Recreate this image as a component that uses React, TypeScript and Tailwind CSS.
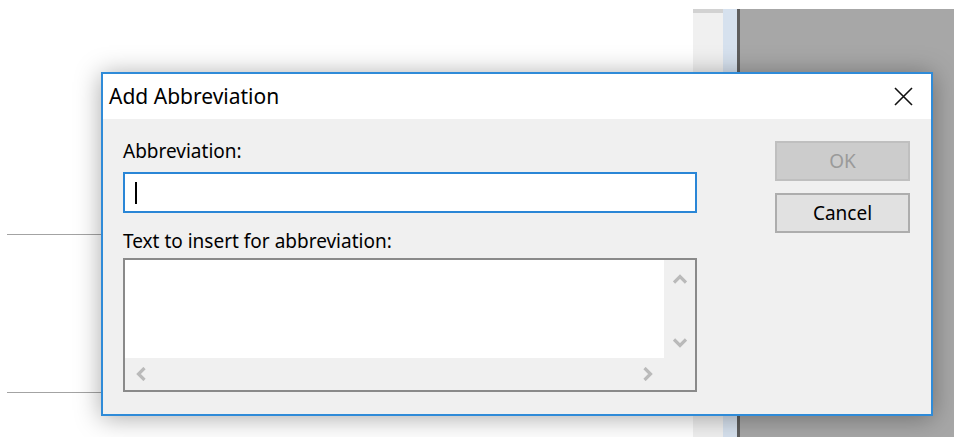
import { ReactNode } from 'react'

const uiFont = { fontFamily: '"Noto Sans", "Open Sans", sans-serif' }

function Chevron({ dir }: { dir: 'up' | 'down' | 'left' | 'right' }) {
  const paths: Record<string, string> = {
    up: 'M1 9.5 L7 3.5 L13 9.5',
    down: 'M1 4.5 L7 10.5 L13 4.5',
    left: 'M9.5 1 L3.5 7 L9.5 13',
    right: 'M4.5 1 L10.5 7 L4.5 13',
  }
  return (
    <svg width="14" height="14" viewBox="0 0 14 14" className="shrink-0">
      <path d={paths[dir]} fill="none" stroke="#bababa" strokeWidth="3.2" />
    </svg>
  )
}

function DialogButton({ children, disabled }: { children: ReactNode; disabled?: boolean }) {
  return (
    <button
      type="button"
      disabled={disabled}
      className={
        disabled
          ? 'flex h-[40px] w-[135px] items-center justify-center border-2 border-[#bfbfbf] bg-[#cccccc] text-[19px] text-[#9a9a9a]'
          : 'flex h-[40px] w-[135px] items-center justify-center border-2 border-[#adadad] bg-[#e1e1e1] text-[19px] text-black'
      }
    >
      {children}
    </button>
  )
}

function AddAbbreviationDialog() {
  return (
    <div
      className="absolute left-[101px] top-[72px] flex h-[344px] w-[832px] flex-col border-2 border-[#2f8bd8] bg-[#f0f0f0] shadow-[0_2px_24px_rgba(0,0,0,0.34)]"
      style={uiFont}
    >
      <div className="flex h-[45px] shrink-0 items-center justify-between bg-white pl-[6px] pr-[18px]">
        <span className="text-[21px] text-black">Add Abbreviation</span>
        <svg width="19" height="19" viewBox="0 0 19 19">
          <path d="M1 1 L18 18 M18 1 L1 18" stroke="#111" strokeWidth="1.6" />
        </svg>
      </div>

      <div className="flex flex-1 pl-[20px] pr-[21px] pt-[19px]">
        <div className="flex w-[574px] flex-col">
          <label className="h-[34px] text-[19px] leading-[27px] text-black">Abbreviation:</label>
          <div className="flex h-[41px] items-center border-2 border-[#2a86d6] bg-white pl-[10px]">
            <div className="h-[22px] w-[2px] bg-black" />
          </div>
          <label className="mt-[16px] h-[29px] text-[19px] leading-[25px] text-black">
            Text to insert for abbreviation:
          </label>
          <div className="flex h-[134px] flex-col border-2 border-[#8a8a8a] bg-white">
            <div className="flex flex-1">
              <div className="flex-1 bg-white" />
              <div className="flex w-[31px] flex-col items-center justify-between bg-[#f0f0f0] pb-[9px] pt-[13px]">
                <Chevron dir="up" />
                <Chevron dir="down" />
              </div>
            </div>
            <div className="flex h-[32px]">
              <div className="flex flex-1 items-center justify-between bg-[#f0f0f0] px-[10px]">
                <Chevron dir="left" />
                <Chevron dir="right" />
              </div>
              <div className="w-[31px] bg-[#f0f0f0]" />
            </div>
          </div>
        </div>

        <div className="ml-auto flex flex-col gap-[12px] pt-[3px]">
          <DialogButton disabled>OK</DialogButton>
          <DialogButton>Cancel</DialogButton>
        </div>
      </div>
    </div>
  )
}

export default function App() {
  return (
    <div className="relative flex h-[437px] w-[954px] flex-col overflow-hidden bg-white">
      <div className="h-[9px] shrink-0 bg-white" />
      <div className="flex flex-1">
        {/* document page with ruled lines */}
        <div className="flex w-[693px] flex-col bg-white pl-[7px]">
          <div className="mt-[225px] h-px bg-[#a3a3a3]" />
          <div className="mt-[157px] h-px bg-[#a3a3a3]" />
        </div>
        {/* scrollbar track */}
        <div className="flex w-[30px] flex-col bg-[#f0f0f0]">
          <div className="h-[4px] bg-[#d2d2d2]" />
        </div>
        <div className="w-[14px] bg-[#d6e1ee]" />
        <div className="w-[3px] bg-[#5e5e5e]" />
        <div className="flex-1 bg-[#a7a7a7]" />
      </div>

      <AddAbbreviationDialog />
    </div>
  )
}
